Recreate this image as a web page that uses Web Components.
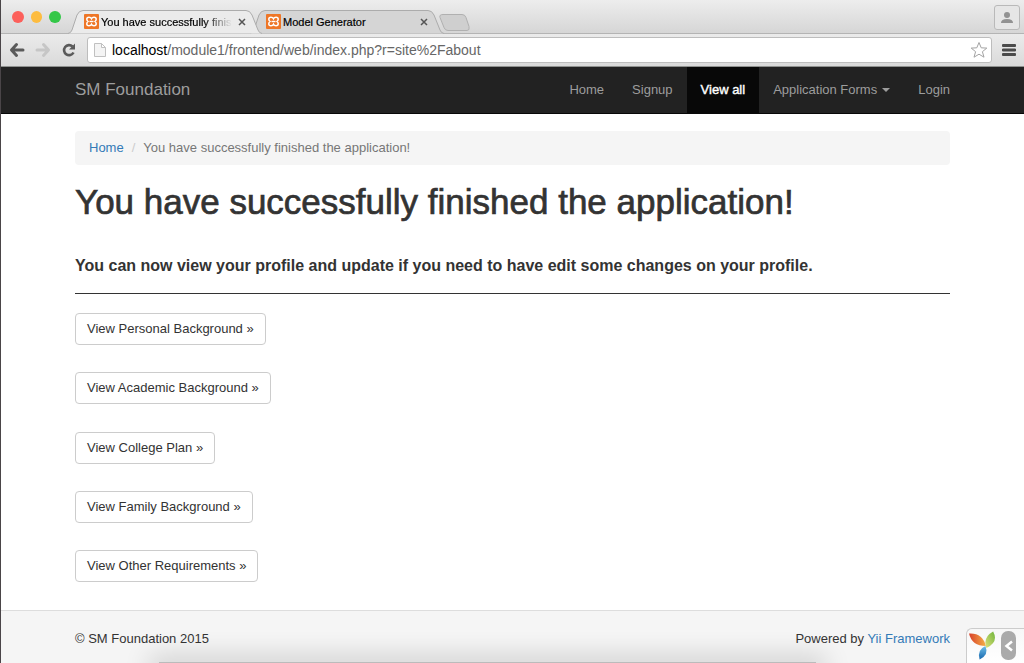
<!DOCTYPE html>
<html lang="en">
<head>
<meta charset="utf-8">
<title>You have successfully finished the application!</title>
<style>
html, body { margin: 0; height: 100%; }
body { font-family: "Liberation Sans", Arial, sans-serif; font-size: 13px; line-height: 20px; color: #333; background: #fff; }
</style>
</head>
<body>
<app-window>
  <browser-chrome slot="chrome">
    <browser-tab slot="tabs" active>You have successfully finis</browser-tab>
    <browser-tab slot="tabs">Model Generator</browser-tab>
  </browser-chrome>
  <site-navbar slot="nav" brand="SM Foundation">
    <nav-item>Home</nav-item>
    <nav-item>Signup</nav-item>
    <nav-item active>View all</nav-item>
    <nav-item dropdown>Application Forms</nav-item>
    <nav-item>Login</nav-item>
  </site-navbar>
  <site-page>
    <site-breadcrumb slot="crumb">You have successfully finished the application!</site-breadcrumb>
    <span slot="title">You have successfully finished the application!</span>
    <span slot="lead">You can now view your profile and update if you need to have edit some changes on your profile.</span>
    <view-button>View Personal Background »</view-button>
    <view-button>View Academic Background »</view-button>
    <view-button>View College Plan »</view-button>
    <view-button>View Family Background »</view-button>
    <view-button>View Other Requirements »</view-button>
  </site-page>
  <site-footer slot="footer"></site-footer>
</app-window>
<script>
function define(name, html) {
  const t = document.createElement('template');
  t.innerHTML = html;
  customElements.define(name, class extends HTMLElement {
    constructor() {
      super();
      this.attachShadow({ mode: 'open' }).appendChild(t.content.cloneNode(true));
    }
    connectedCallback() {
      const b = this.shadowRoot.querySelector('[data-brand]');
      if (b) b.textContent = this.getAttribute('brand');
    }
  });
}

define('app-window', `
<style>
:host { display: flex; flex-direction: column; min-height: 100vh; box-sizing: border-box; border-left: 1px solid #4a4548; position: relative; overflow: hidden; }
main { flex: 1; display: flex; flex-direction: column; }
</style>
<slot name="chrome"></slot><slot name="nav"></slot>
<main><slot></slot></main>
<slot name="footer"></slot>`);

define('browser-chrome', `
<style>
:host { display: block; }
.strip { display: flex; align-items: flex-end; height: 33px; background: linear-gradient(#ededed, #d6d6d6); border-bottom: 1px solid #b4b4b4; }
.lights { display: flex; gap: 7px; align-self: center; padding: 0 7px 0 11px; width: 49px; }
.lights i { width: 12px; height: 12px; border-radius: 50%; background: #fc605b; }
.lights i + i { background: #fdbc40; }
.lights i + i + i { background: #34c748; }
.tabs { display: flex; flex: 1; align-items: flex-end; height: 100%; }
.new { margin: 0 0 2px 7px; width: 32px; height: 17px; border: 0; padding: 0; background: none; }
.user { box-sizing: border-box; width: 26px; height: 25px; margin: 0 4px 3px; padding: 0; border: 1px solid #b9b9b9; border-radius: 3px; background: #e6e6e6; display: grid; place-items: center; }
.bar { display: flex; align-items: center; height: 32px; background: linear-gradient(#ebebeb, #dadada); border-bottom: 1px solid #8f918f; padding: 0 8px; }
.icon { border: 0; padding: 0; background: none; display: block; width: 16px; height: 16px; margin-right: 10px; }
svg { display: block; }
.url { flex: 1; display: flex; align-items: center; box-sizing: border-box; height: 26px; background: #fff; border: 1px solid #bdbdbd; border-radius: 3px; padding: 0 3px 0 6px; gap: 6px; font-size: 14px; color: #666; }
.url div { flex: 1; }
.url b { font-weight: 400; color: #000; }
.star, .menu { border: 0; padding: 0; background: none; }
.menu { margin-left: 10px; }
</style>
<div class="strip">
  <div class="lights"><i></i><i></i><i></i></div>
  <div class="tabs"><slot name="tabs"></slot>
    <button class="new" aria-label="New tab"><svg width="32" height="17"><path d="M4 .5H23q3 0 4 3l3 9q1 4-2 4H9q-3 0-4-3L1 3.500Q0 .5 4 .5z" fill="#cfcfcf" stroke="#b0b0b0"/></svg></button></div>
  <button class="user" aria-label="Profile"><svg width="14" height="14"><circle cx="7" cy="4" r="3" fill="#929292"/><path d="M1 12Q1 8 7 8t6 4z" fill="#929292"/></svg></button>
</div>
<div class="bar">
  <button class="icon" aria-label="Back"><svg width="16" height="16"><path d="M7.500 2.500L2.500 8 7.500 13.500M3 8H14" fill="none" stroke="#5a5a5a" stroke-width="3" stroke-linecap="round" stroke-linejoin="round"/></svg></button>
  <button class="icon" aria-label="Forward"><svg width="16" height="16"><path d="M8.500 2.500L13.500 8 8.500 13.500M13 8H2" fill="none" stroke="#c6c6c6" stroke-width="3" stroke-linecap="round" stroke-linejoin="round"/></svg></button>
  <button class="icon" aria-label="Reload"><svg width="16" height="16"><path d="M12.500 10.500A5 5 0 1 1 11.500 4.500" fill="none" stroke="#5a5a5a" stroke-width="2.600"/><path d="M14 1.500V7.500H8z" fill="#5a5a5a"/></svg></button>
  <div class="url">
    <svg width="12" height="16"><path d="M.5 1.500H7.500L11.500 5.500V14.500H.5zM7.500 1.500V5.500H11.500" fill="#f4f4f4" stroke="#c0c0c0"/></svg>
    <div><b>localhost</b>/module1/frontend/web/index.php?r=site%2Fabout</div>
    <button class="star" aria-label="Bookmark"><svg width="18" height="18"><path d="M9 1.500l2.200 5.300 5.600.3-4.400 3.600 1.600 5.500L9 13.200l-5 3 1.600-5.500L1.200 7.100l5.600-.3z" fill="#fff" stroke="#a3a3a3"/></svg></button>
  </div>
  <button class="menu" aria-label="Menu"><svg width="14" height="14"><path d="M1 2.500H13M1 7H13M1 11.500H13" stroke="#4b4b4b" stroke-width="2.800" stroke-linecap="round"/></svg></button>
</div>`);

define('browser-tab', `
<style>
:host { display: flex; align-items: center; position: relative; isolation: isolate; box-sizing: border-box; width: 195px; height: 23px; padding: 0 10px 0 16px; margin-right: -13px; font-size: 11px; color: #000; --fill: #d5d5d5; }
:host([active]) { --fill: #ebebeb; z-index: 1; }
.shape { position: absolute; inset: 0; z-index: -1; }
.logo { width: 15px; height: 15px; flex: none; margin-right: 2px; }
.label { flex: 1; overflow: hidden; white-space: nowrap; -webkit-text-stroke: 0.2px #000; }
:host([active]) .label { -webkit-mask-image: linear-gradient(to right, #000 calc(100% - 28px), transparent); }
button { border: 0; background: none; padding: 0; margin: 0 7px 0 6px; }
svg { display: block; }
</style>
<svg class="shape" width="195" height="24"><path d="M0 23.500Q3 23 4 20L9 5Q11 .5 15 .5H178Q182 .5 184 5l6 15q1 3 4 3.500" style="fill:var(--fill)" stroke="#acacac"/></svg>
<svg class="logo" viewBox="0 0 15 15"><rect width="15" height="15" rx="1" fill="#ee7627"/><path d="M7.500 4.800Q8.200 3.300 10 3.300Q12.200 3.300 12.200 5.300Q12.200 6.600 11 7.500Q12.200 8.400 12.200 9.700Q12.200 11.700 10 11.700Q8.200 11.700 7.500 10.200Q6.800 11.700 5 11.700Q2.800 11.700 2.800 9.700Q2.800 8.400 4 7.500Q2.800 6.600 2.800 5.300Q2.800 3.300 5 3.300Q6.800 3.300 7.500 4.800z" fill="none" stroke="#fff" stroke-width="1.500"/><path d="M5.500 7.500H9.500" stroke="#fff" stroke-width="1.400"/></svg>
<span class="label"><slot></slot></span>
<button aria-label="Close tab"><svg width="8" height="8"><path d="M1 1l6 6M7 1L1 7" stroke="#555" stroke-width="1.500"/></svg></button>`);

define('site-navbar', `
<style>
:host { display: block; background: #222; border-bottom: 1px solid #080808; }
nav { display: flex; align-items: stretch; height: 46px; margin: 0 60px 0 74px; }
a { color: #9d9d9d; text-decoration: none; font-size: 17px; line-height: 46px; margin-right: auto; }
</style>
<nav><a href="#" data-brand></a><slot></slot></nav>`);

define('nav-item', `
<style>
:host { display: block; }
a { display: flex; align-items: center; height: 46px; padding: 0 14px; color: #9d9d9d; text-decoration: none; }
i { display: none; border: 4px solid transparent; border-top-color: #9d9d9d; border-bottom: 0; margin-left: 5px; }
:host([dropdown]) i { display: block; }
:host([active]) a { background: #080808; color: #fff; -webkit-text-stroke: 0.4px #fff; }
</style>
<a href="#"><slot></slot><i></i></a>`);

define('site-page', `
<style>
:host { flex: 1; display: flex; flex-direction: column; padding: 17px 74px 28px; }
h1 { margin: 17px 0 34px; font-size: 35px; line-height: 40px; font-weight: 400; -webkit-text-stroke: 0.7px #333; }
h4 { margin: 0; font-size: 16px; line-height: 20px; font-weight: 700; }
hr { width: 100%; box-sizing: border-box; margin: 17px 0 19px; border: 0; border-top: 1px solid #333; }
.list { flex: 1; display: flex; flex-direction: column; align-items: flex-start; justify-content: space-between; gap: 16px; }
</style>
<slot name="crumb"></slot>
<h1><slot name="title"></slot></h1>
<h4><slot name="lead"></slot></h4>
<hr>
<div class="list"><slot></slot></div>`);

define('site-breadcrumb', `
<style>
:host { display: block; background: #f5f5f5; border-radius: 4px; color: #777; }
ol { list-style: none; display: flex; margin: 0; padding: 7px 14px; line-height: 20px; }
a { color: #337ab7; text-decoration: none; }
i { font-style: normal; color: #ccc; padding: 0 8px; }
</style>
<ol><li><a href="#">Home</a></li><li><i>/</i><slot></slot></li></ol>`);

define('view-button', `
<style>
:host { display: block; }
button { font: inherit; color: #333; background: #fff; border: 1px solid #ccc; border-radius: 4px; height: 32px; padding: 0 11px; }
</style>
<button><slot></slot></button>`);

define('site-footer', `
<style>
:host { display: flex; align-items: center; justify-content: space-between; box-sizing: border-box; height: 53px; padding: 4px 74px 0; background: #f5f5f5; border-top: 1px solid #ddd; position: relative; }
a { color: #337ab7; text-decoration: none; }
.shade { position: absolute; left: 158px; right: 208px; bottom: 0; height: 1px; box-shadow: 0 4px 26px 10px rgba(0,0,0,.16); background: #bbb; }
.debug { position: absolute; right: 0; bottom: 0; width: 58px; height: 35px; box-sizing: border-box; border: 1px solid #ccc; border-right: 0; border-bottom: 0; border-radius: 6px 0 0 0; background: linear-gradient(#f7f7f7, #fff); display: flex; gap: 4px; padding: 2px 0 0 2px; }
.debug button { border: 0; padding: 0; width: 15px; height: 29px; border-radius: 7px; background: #aaa; display: grid; place-items: center; }
svg { display: block; }
span { position: relative; }
</style>
<div class="shade"></div>
<span>© SM Foundation 2015</span>
<span>Powered by <a href="#">Yii Framework</a></span>
<div class="debug">
<svg width="28" height="30" viewBox="0 0 29 30"><defs><linearGradient id="o"><stop stop-color="#d8402a"/><stop offset="1" stop-color="#f5b047"/></linearGradient><linearGradient id="g" x1="1" x2="0" y2="1"><stop stop-color="#6fb53c"/><stop offset="1" stop-color="#e0e07a"/></linearGradient><linearGradient id="b" x1="0" x2="0" y2="1"><stop stop-color="#70bfe8"/><stop offset="1" stop-color="#1667ae"/></linearGradient></defs><path d="M0 2Q14 1 17.500 15Q3 15 0 2z" fill="url(#o)"/><path d="M25 0Q31 11 18 17Q14 6 25 0z" fill="url(#g)"/><path d="M17 15Q21 24 11 29Q8 19 17 15z" fill="url(#b)"/></svg>
<button aria-label="Hide toolbar"><svg width="10" height="14"><path d="M8 2.500L2.500 7 8 11.500" fill="none" stroke="#fff" stroke-width="2.500"/></svg></button>
</div>`);
</script>
</body>
</html>
